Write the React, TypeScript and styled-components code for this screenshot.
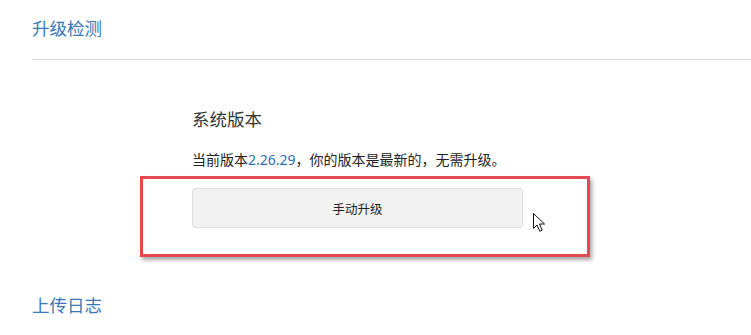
import React from 'react';
import styled, { createGlobalStyle } from 'styled-components';

const GlobalStyle = createGlobalStyle`
  html, body {
    margin: 0;
    padding: 0;
    background: #ffffff;
  }

  body {
    font-family: "Noto Sans", "Noto Sans CJK SC", sans-serif;
    color: #333333;
  }
`;

const Page = styled.div`
  padding: 16px 0 0 32px;
  overflow: hidden;
`;

const SectionTitle = styled.h2<{ divided?: boolean }>`
  margin: 0;
  font-size: 17.5px;
  line-height: 24px;
  font-weight: 400;
  color: #3a78b9;
  padding-bottom: ${({ divided }) => (divided ? '19px' : '0')};
  border-bottom: ${({ divided }) => (divided ? '1px solid #d9d9d9' : 'none')};
`;

const SectionBody = styled.div`
  padding: 47px 0 65px 160px;
`;

const BlockTitle = styled.h3`
  margin: 0;
  font-size: 17.5px;
  line-height: 24px;
  font-weight: 400;
  color: #333333;
`;

const Description = styled.p`
  margin: 19px 0 0;
  font-size: 14px;
  line-height: 20px;
  color: #222222;
`;

const Version = styled.span`
  color: #2a6eb5;
`;

const ButtonRow = styled.div`
  position: relative;
  width: 331px;
  margin-top: 18px;
`;

const UpgradeButton = styled.button`
  display: block;
  width: 100%;
  height: 40px;
  background: #f2f2f2;
  border: 1px solid #dedede;
  border-radius: 3px;
  font-family: "Noto Sans CJK SC", sans-serif;
  font-size: 12.5px;
  color: #222222;
  cursor: pointer;
`;

/* annotation frame drawn over the screenshot */
const HighlightFrame = styled.div`
  position: absolute;
  top: -12px;
  left: -52px;
  right: -67px;
  bottom: -29px;
  border: 3px solid #e5484d;
  box-shadow: 2px 3px 4px rgba(0, 0, 0, 0.35);
  pointer-events: none;
`;

const Cursor = styled.svg`
  position: absolute;
  left: 340px;
  top: 24px;
  pointer-events: none;
`;

const App: React.FC = () => {
  return (
    <>
      <GlobalStyle />
      <Page>
        <SectionTitle divided>升级检测</SectionTitle>
        <SectionBody>
          <BlockTitle>系统版本</BlockTitle>
          <Description>
            当前版本<Version>2.26.29</Version>，你的版本是最新的，无需升级。
          </Description>
          <ButtonRow>
            <UpgradeButton>手动升级</UpgradeButton>
            <HighlightFrame />
            <Cursor width="15" height="21" viewBox="0 0 15 21">
              <path
                d="M1.5 1.5 L1.5 16.5 L5 13 L7.8 19.3 L10.2 18.2 L7.5 12 L12.5 12 Z"
                fill="#ffffff"
                stroke="#111111"
                strokeWidth="1"
                strokeLinejoin="miter"
              />
            </Cursor>
          </ButtonRow>
        </SectionBody>
        <SectionTitle>上传日志</SectionTitle>
      </Page>
    </>
  );
};

export default App;
